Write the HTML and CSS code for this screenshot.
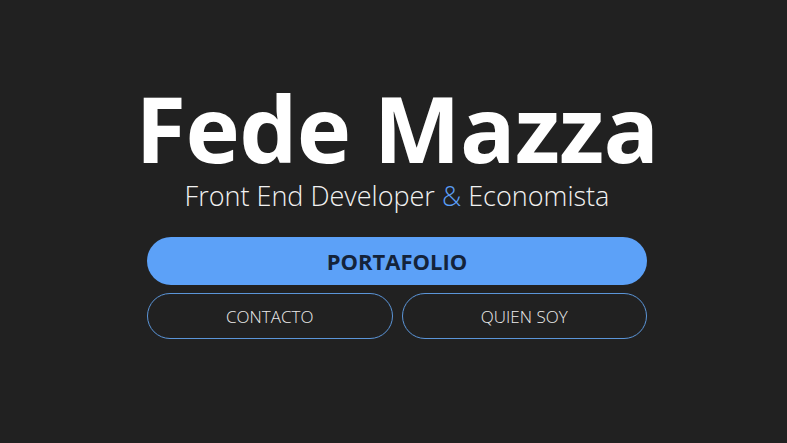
FILE: index.html
```html
<!DOCTYPE html>
<html lang="es">
<head>
<meta charset="utf-8">
<title>Fede Mazza</title>
<link rel="stylesheet" href="styles.css">
</head>
<body>
<main class="hero">
  <h1 class="name">Fede Mazza</h1>
  <p class="role">Front End Developer <span class="amp">&amp;</span> Economista</p>
  <nav class="actions">
    <a class="btn btn-primary" href="#">PORTAFOLIO</a>
    <div class="row">
      <a class="btn btn-outline" href="#">CONTACTO</a>
      <a class="btn btn-outline" href="#">QUIEN SOY</a>
    </div>
  </nav>
</main>
</body>
</html>
```
FILE: styles.css
```css
html, body {
  margin: 0;
  height: 100%;
  background: #212121;
  font-family: "Open Sans", "Noto Sans", sans-serif;
  color: #fff;
}
.hero {
  height: 100%;
  display: flex;
  flex-direction: column;
  align-items: center;
  padding: 82px 0 0 7px;
  box-sizing: border-box;
}
.name {
  margin: 0;
  font-size: 92px;
  font-weight: 700;
  line-height: 92px;
  letter-spacing: -0.6px;
}
.role {
  margin: 4px 0 0;
  font-size: 27px;
  font-weight: 300;
  line-height: 36px;
  color: #f2f2f2;
}
.amp { color: #5b9ef5; }
.actions {
  margin-top: 23px;
  width: 500px;
  display: flex;
  flex-direction: column;
  gap: 8px;
}
.row {
  display: grid;
  grid-template-columns: 1fr 1fr;
  gap: 9px;
}
.btn {
  display: flex;
  align-items: center;
  justify-content: center;
  border-radius: 999px;
  text-decoration: none;
  box-sizing: border-box;
}
.btn-primary {
  height: 48px;
  background: #5ca1f8;
  color: #14233a;
  font-weight: 700;
  font-size: 22px;
}
.btn-outline {
  height: 46px;
  border: 1px solid #5b95d8;
  color: #ececec;
  font-size: 17px;
  font-weight: 300;
}
```
